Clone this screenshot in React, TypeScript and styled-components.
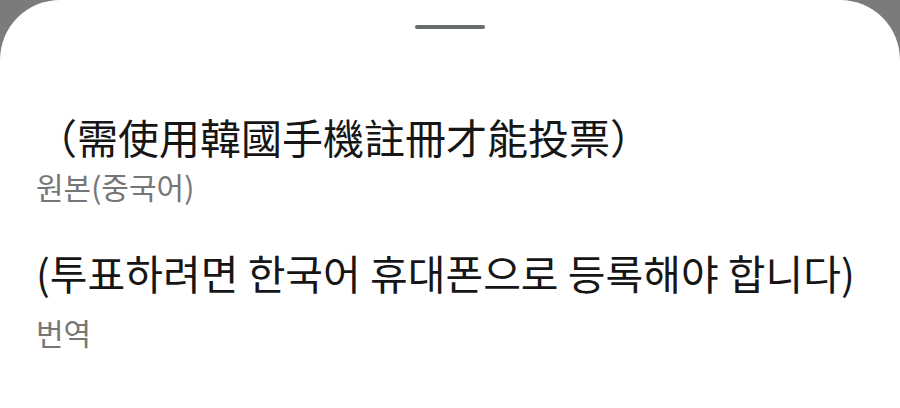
import { createGlobalStyle, styled } from 'styled-components';

const GlobalStyle = createGlobalStyle`
  html, body {
    margin: 0;
    padding: 0;
    background: #7b7b7b;
  }
  body {
    font-family: "Noto Sans CJK KR", "Noto Sans CJK TC", "Noto Sans", sans-serif;
  }
`;

const Sheet = styled.div`
  width: 900px;
  height: 408px;
  background: #ffffff;
  border-radius: 60px 60px 0 0;
  display: flex;
  flex-direction: column;
  overflow: hidden;
`;

const Handle = styled.div`
  align-self: center;
  width: 70px;
  height: 4px;
  margin-top: 25px;
  border-radius: 2px;
  background: #676c6f;
`;

const Content = styled.div`
  display: flex;
  flex-direction: column;
  padding: 79px 36px 0;
`;

const Block = styled.div<{ $gap?: number }>`
  display: flex;
  flex-direction: column;
  margin-top: ${(p) => p.$gap ?? 0}px;
`;

const MainText = styled.div<{ $lang: 'zh' | 'ko' }>`
  font-family: ${(p) =>
    p.$lang === 'zh'
      ? '"Noto Sans CJK TC", "Noto Sans CJK KR", sans-serif'
      : '"Noto Sans CJK KR", sans-serif'};
  font-size: 41px;
  line-height: 1.4;
  color: #161616;
  white-space: nowrap;
`;

const Caption = styled.div<{ $offset: number }>`
  font-family: "Noto Sans CJK KR", sans-serif;
  font-size: 30px;
  line-height: 1.4;
  color: #767676;
  margin-top: ${(p) => p.$offset}px;
`;

function App() {
  return (
    <>
      <GlobalStyle />
      <Sheet>
        <Handle />
        <Content>
          <Block>
            <MainText $lang="zh">（需使用韓國手機註冊才能投票）</MainText>
            <Caption $offset={0}>원본(중국어)</Caption>
          </Block>
          <Block $gap={37}>
            <MainText $lang="ko">(투표하려면 한국어 휴대폰으로 등록해야 합니다)</MainText>
            <Caption $offset={9}>번역</Caption>
          </Block>
        </Content>
      </Sheet>
    </>
  );
}

export default App;
